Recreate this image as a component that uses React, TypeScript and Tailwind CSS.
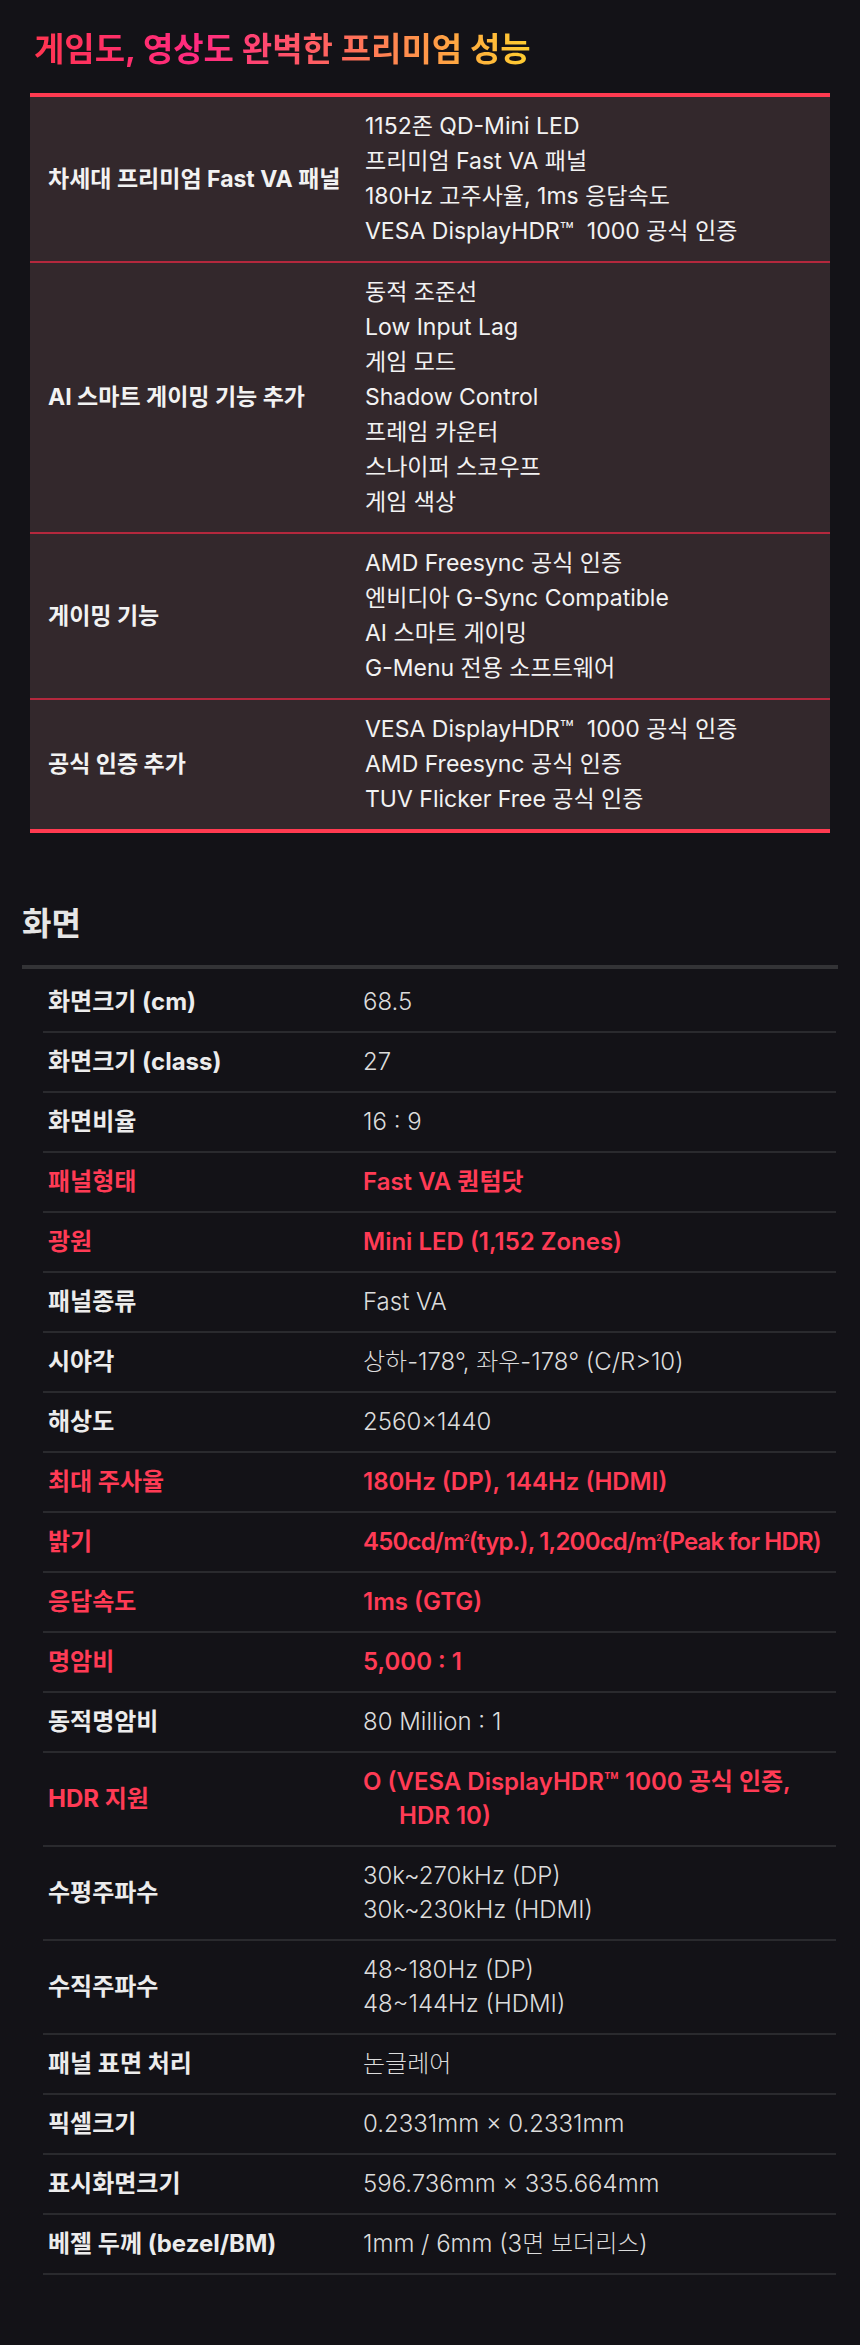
const highlights = [
  {
    label: "차세대 프리미엄 Fast VA 패널",
    items: [
      "1152존 QD-Mini LED",
      "프리미엄 Fast VA 패널",
      "180Hz 고주사율, 1ms 응답속도",
      "VESA DisplayHDR™  1000 공식 인증",
    ],
  },
  {
    label: "AI 스마트 게이밍 기능 추가",
    items: [
      "동적 조준선",
      "Low Input Lag",
      "게임 모드",
      "Shadow Control",
      "프레임 카운터",
      "스나이퍼 스코우프",
      "게임 색상",
    ],
  },
  {
    label: "게이밍 기능",
    items: [
      "AMD Freesync 공식 인증",
      "엔비디아 G-Sync Compatible",
      "AI 스마트 게이밍",
      "G-Menu 전용 소프트웨어",
    ],
  },
  {
    label: "공식 인증 추가",
    items: [
      "VESA DisplayHDR™  1000 공식 인증",
      "AMD Freesync 공식 인증",
      "TUV Flicker Free 공식 인증",
    ],
  },
];

type Spec = { label: string; value: React.ReactNode[]; hot?: boolean };

const M2 = () => (
  <>
    m<sup className="text-[9px] -top-[1em]">2</sup>
  </>
);

const specs: Spec[] = [
  { label: "화면크기 (cm)", value: ["68.5"] },
  { label: "화면크기 (class)", value: ["27"] },
  { label: "화면비율", value: ["16 : 9"] },
  { label: "패널형태", value: ["Fast VA 퀀텀닷"], hot: true },
  { label: "광원", value: ["Mini LED (1,152 Zones)"], hot: true },
  { label: "패널종류", value: ["Fast VA"] },
  { label: "시야각", value: ["상하-178°, 좌우-178° (C/R>10)"] },
  { label: "해상도", value: ["2560×1440"] },
  { label: "최대 주사율", value: ["180Hz (DP), 144Hz (HDMI)"], hot: true },
  {
    label: "밝기",
    value: [
      <span className="tracking-[-0.8px]">
        450cd/
        <M2 />
        (typ.), 1,200cd/
        <M2 />
        (Peak for HDR)
      </span>,
    ],
    hot: true,
  },
  { label: "응답속도", value: ["1ms (GTG)"], hot: true },
  { label: "명암비", value: ["5,000 : 1"], hot: true },
  { label: "동적명암비", value: ["80 Million : 1"] },
  {
    label: "HDR 지원",
    value: [
      "O (VESA DisplayHDR™ 1000 공식 인증,",
      <span className="pl-[36px]">HDR 10)</span>,
    ],
    hot: true,
  },
  { label: "수평주파수", value: ["30k~270kHz (DP)", "30k~230kHz (HDMI)"] },
  { label: "수직주파수", value: ["48~180Hz (DP)", "48~144Hz (HDMI)"] },
  { label: "패널 표면 처리", value: ["논글레어"] },
  { label: "픽셀크기", value: ["0.2331mm × 0.2331mm"] },
  { label: "표시화면크기", value: ["596.736mm × 335.664mm"] },
  { label: "베젤 두께 (bezel/BM)", value: ["1mm / 6mm (3면 보더리스)"] },
];

export default function App() {
  return (
    <div className="min-h-[2345px] bg-[#131217] font-['Inter','Noto_Sans_CJK_KR',sans-serif] text-[#f2f2f2]">
      <section className="px-[30px] pt-[29px]">
        <h1 className="ml-1 mb-[24px] text-[33px] font-bold leading-[40px]">
          <span className="inline-block bg-[linear-gradient(90deg,#ff3550_0%,#ff2a80_33%,#ff6a5c_62%,#ffcf30_100%)] bg-clip-text text-transparent">
            게임도, 영상도 완벽한 프리미엄 성능
          </span>
        </h1>
        <div className="border-y-4 border-[#ff3a50] bg-[#33282c]">
          {highlights.map((row, i) => (
            <div
              key={row.label}
              className={`grid grid-cols-[335px_1fr] items-center py-3 ${
                i < highlights.length - 1 ? "border-b-2 border-[#b4283d]" : ""
              }`}
            >
              <p className="pl-[18px] text-[23px] font-bold">{row.label}</p>
              <ul className="text-[23px] leading-[35px] whitespace-pre">
                {row.items.map((t) => (
                  <li key={t}>{t}</li>
                ))}
              </ul>
            </div>
          ))}
        </div>
      </section>

      <section className="px-[22px] pt-[71px] pb-16">
        <h2 className="text-[32px] font-semibold leading-[40px] text-[#e6e6e6]">화면</h2>
        <div className="mt-[21px] h-1 bg-[#333336]" />
        <div className="ml-[21px] mr-[2px] mt-1">
          {specs.map((s) => (
            <div
              key={s.label}
              className={`grid grid-cols-[320px_1fr] items-center py-3 border-b-2 border-[#2a2a2e] text-[24px] leading-[34px] ${
                s.hot ? "text-[#ff3b55]" : ""
              }`}
            >
              <p className={`pl-[5px] font-bold ${s.hot ? "" : "text-[#ececec]"}`}>{s.label}</p>
              <div
                className={`whitespace-nowrap ${
                  s.hot ? "font-semibold" : "font-light text-[#dcdcdc]"
                }`}
              >
                {s.value.map((v, i) => (
                  <div key={i}>{v}</div>
                ))}
              </div>
            </div>
          ))}
        </div>
      </section>
    </div>
  );
}
